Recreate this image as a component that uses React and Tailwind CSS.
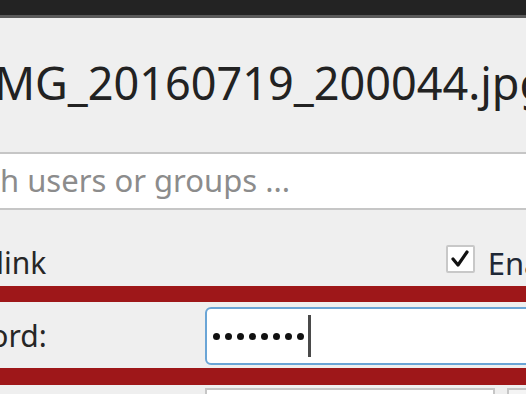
export default function App() {
  const dots = [0, 1, 2, 3, 4, 5, 6, 7];
  return (
    <div className="w-[526px] h-[394px] overflow-hidden bg-[#efefef] font-['Noto_Sans','Open_Sans',sans-serif] text-[#262626] flex flex-col">
      <div className="h-[15px] shrink-0 bg-[#232323]" />
      <div className="h-[3px] shrink-0 bg-[#5a5a5a]" />
      <div className="h-[134px] shrink-0 pt-[42px] whitespace-nowrap">
        <div className="-ml-[21px] text-[45px] leading-[45px] text-[#222]">IMG_20160719_200044.jpg</div>
      </div>
      <div className="h-[58px] shrink-0 -ml-[80px] -mr-[10px] border-2 border-[#c6c6c6] bg-white pt-[11px] whitespace-nowrap">
        <div className="text-[31px] leading-[31px] text-[#8c8c8c] -ml-[1px]">Search users or groups ...</div>
      </div>
      <div className="h-[76px] shrink-0 flex items-start pt-[38px] whitespace-nowrap">
        <div className="-ml-[92px] text-[30px] leading-[30px]">Share link</div>
        <div className="ml-auto flex items-start -mr-[60px]">
          <div className="-mt-[3px] w-[29px] h-[28px] border-2 border-[#c8c8c8] bg-white rounded-[2px] flex items-center justify-center">
            <svg width="20" height="18" viewBox="0 0 20 18">
              <path d="M3 9 L8 15 L17 2" fill="none" stroke="#111" strokeWidth="3.2" strokeLinecap="round" strokeLinejoin="round" />
            </svg>
          </div>
          <div className="ml-[13px] text-[31px] leading-[30px] text-[#1e2836]">Enable</div>
        </div>
      </div>
      <div className="h-[16px] shrink-0 bg-[#9e1719]" />
      <div className="h-[66px] shrink-0 flex items-start">
        <div className="w-[205px] shrink-0 pt-[19px] whitespace-nowrap">
          <div className="-ml-[97px] text-[30px] leading-[30px]">Password:</div>
        </div>
        <div className="mt-[5px] h-[58px] grow -mr-[40px] border-2 border-[#6aa5d6] rounded-[6px] bg-white flex items-center pl-[6px]">
          <div className="flex items-center gap-[5px]">
            {dots.map((d) => (
              <span key={d} className="block w-[7px] h-[7px] rounded-full bg-[#111]" />
            ))}
          </div>
          <div className="ml-[4px] w-[3px] h-[42px] bg-[#4a4a4a]" />
        </div>
      </div>
      <div className="h-[17px] shrink-0 bg-[#9e1719]" />
      <div className="h-[20px] shrink-0 flex items-start pt-[3px]">
        <div className="w-[205px] shrink-0" />
        <div className="w-[298px] h-[20px] border-l-2 border-t-2 border-r-2 border-[#c6c6c6] bg-white" />
        <div className="ml-[12px] w-[20px] h-[20px] border-l-2 border-t-2 border-[#c6c6c6] bg-[#f4f4f4]" />
      </div>
    </div>
  );
}
